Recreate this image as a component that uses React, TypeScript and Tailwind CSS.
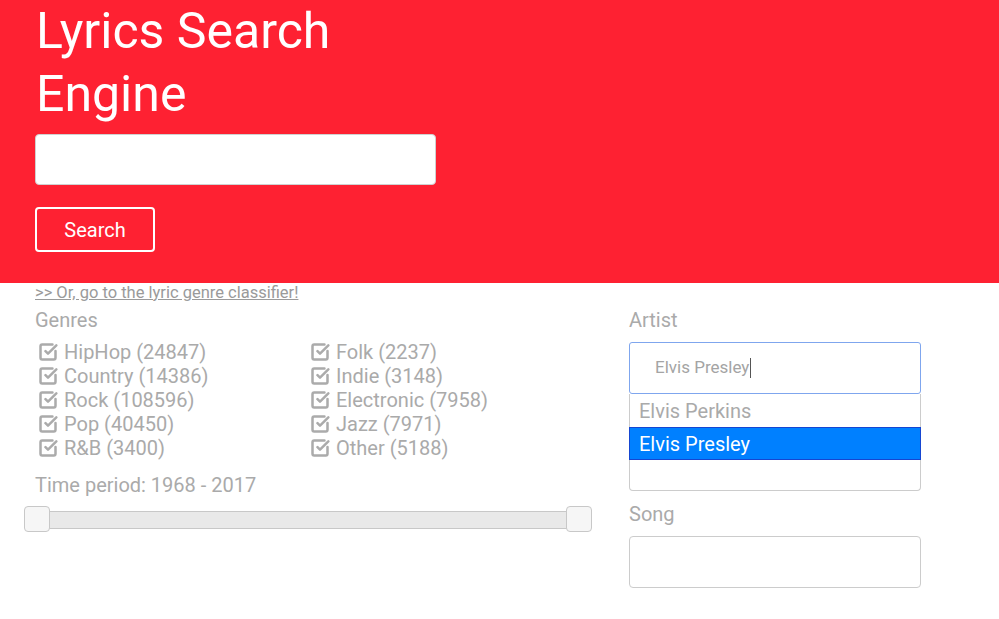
import React from 'react';
import { SquareCheckBig } from 'lucide-react';

const genres: [string, string][] = [
  ['HipHop (24847)', 'Folk (2237)'],
  ['Country (14386)', 'Indie (3148)'],
  ['Rock (108596)', 'Electronic (7958)'],
  ['Pop (40450)', 'Jazz (7971)'],
  ['R&B (3400)', 'Other (5188)'],
];

function Genre({ label }: { label: string }) {
  return (
    <div className="flex items-center h-[24px]">
      <SquareCheckBig size={20} strokeWidth={3} className="ml-[3px] mr-[6px] text-[#ababab]" />
      <span>{label}</span>
    </div>
  );
}

export default function App() {
  return (
    <div className="min-h-screen bg-white" style={{ fontFamily: 'Roboto, "Liberation Sans", sans-serif' }}>
      {/* Header */}
      <header className="bg-[#fe2132] px-[35px] pb-[31px]">
        <h1 className="text-white text-[50px] leading-[63px] font-normal w-[400px] ml-[1px]">Lyrics Search Engine</h1>
        <input
          type="text"
          className="mt-[8px] block w-[401px] h-[51px] rounded-[4px] bg-white border border-[#d0d0d0] outline-none px-3"
        />
        <button className="mt-[22px] w-[120px] h-[45px] rounded-[4px] border-2 border-white text-white text-[20px]">
          Search
        </button>
      </header>

      {/* Body */}
      <div className="flex px-[35px] text-[#aaaaaa]">
        <div className="w-[560px]">
          <a href="#" className="block text-[16.5px] leading-[20px] text-[#9a9a9a] underline">
            &gt;&gt; Or, go to the lyric genre classifier!
          </a>
          <div className="mt-[5px] text-[20px] leading-[24px]">Genres</div>
          <div className="mt-[8px] grid grid-cols-[272px_1fr] text-[20px] leading-[24px]">
            {genres.map(([a, b]) => (
              <React.Fragment key={a}>
                <Genre label={a} />
                <Genre label={b} />
              </React.Fragment>
            ))}
          </div>
          <div className="mt-[13px] text-[20px] leading-[24px]">Time period: 1968 - 2017</div>
          <div className="relative mt-[14px] ml-[1px] w-[544px] h-[18px] bg-[#e9e9e9] border border-[#c8c8c8]">
            <span className="absolute left-[-13px] top-[-6px] w-[26px] h-[26px] rounded-[4px] bg-[#f6f6f6] border border-[#c8c8c8]" />
            <span className="absolute right-[-13px] top-[-6px] w-[26px] h-[26px] rounded-[4px] bg-[#f6f6f6] border border-[#c8c8c8]" />
          </div>
        </div>

        <div className="ml-[34px] w-[292px] pt-[25px]">
          <div className="text-[20px] leading-[24px]">Artist</div>
          <div className="mt-[10px] h-[52px] rounded-[3px] border border-[#7fa6ee] flex items-center pl-[25px] text-[17px] text-[#a4a4a4]">
            <span>Elvis Presley</span>
            <span className="w-px h-[20px] bg-[#555] ml-[1px]" />
          </div>
          <div className="h-[97px] border-x border-b border-[#cccccc] rounded-b-[4px] text-[20px]">
            <div className="h-[33px] flex items-center px-[9px]">Elvis Perkins</div>
            <div className="h-[33px] flex items-center px-[9px] bg-[#0080ff] border border-[#1646d1] text-white -mx-px">
              Elvis Presley
            </div>
          </div>
          <div className="mt-[11px] text-[20px] leading-[24px]">Song</div>
          <div className="mt-[10px] h-[52px] rounded-[4px] border border-[#cccccc]" />
        </div>
      </div>
    </div>
  );
}
